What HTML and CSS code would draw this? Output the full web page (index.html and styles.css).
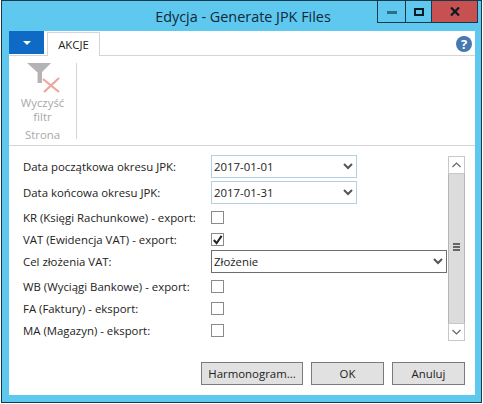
FILE: index.html
```html
<!DOCTYPE html>
<html lang="pl">

<head>
    <meta charset="UTF-8">
    <title>Edycja - Generate JPK Files</title>
    <link rel="stylesheet" href="styles.css">
</head>

<body>
    <div class="window">
        <div class="titlebar">
            <span class="title">Edycja - Generate JPK Files</span>
            <div class="window-controls">
                <div class="ctrl ctrl-min"><span class="min-glyph"></span></div>
                <div class="ctrl ctrl-max"><span class="max-glyph"></span></div>
                <div class="ctrl ctrl-close">
                    <svg width="10" height="9" viewBox="0 0 10 9"><path d="M1 0.5 L9 8.5 M9 0.5 L1 8.5" stroke="#0c1a26" stroke-width="2.2" fill="none"/></svg>
                </div>
            </div>
        </div>

        <div class="content">
            <div class="tabs">
                <div class="menu-button"><span class="menu-arrow"></span></div>
                <div class="tab">AKCJE</div>
                <div class="help">?</div>
            </div>

            <div class="ribbon">
                <div class="ribbon-group">
                    <svg class="filter-icon" width="34" height="30" viewBox="0 0 34 30">
                        <path d="M0 0 H24 L15 9 V20 L10 20 V9 Z" fill="#b4b4b6"/>
                        <path d="M10.5 9 V20" stroke="#dcdcdc" stroke-width="1"/>
                        <path d="M16 16 L32 29 M32 15 L17 29" stroke="#eda59c" stroke-width="2.2" fill="none"/>
                    </svg>
                    <div class="ribbon-label">Wyczyść<br>filtr</div>
                    <div class="group-name">Strona</div>
                </div>
            </div>

            <div class="form-area">
                <div class="form">
                    <div class="row row-field">
                        <label>Data początkowa okresu JPK:</label>
                        <div class="field date-field"><span>2017-01-01</span><svg class="chev" width="10" height="7" viewBox="0 0 10 7"><path d="M1 1 L5 5 L9 1" stroke="#555" stroke-width="2" fill="none"/></svg></div>
                    </div>
                    <div class="row row-field">
                        <label>Data końcowa okresu JPK:</label>
                        <div class="field date-field"><span>2017-01-31</span><svg class="chev" width="10" height="7" viewBox="0 0 10 7"><path d="M1 1 L5 5 L9 1" stroke="#555" stroke-width="2" fill="none"/></svg></div>
                    </div>
                    <div class="row">
                        <label>KR (Księgi Rachunkowe) - export:</label>
                        <div class="checkbox"></div>
                    </div>
                    <div class="row">
                        <label>VAT (Ewidencja VAT) - export:</label>
                        <div class="checkbox"><svg width="12" height="12" viewBox="0 0 12 12"><path d="M2 6 L5 9.5 L10.5 1.5" stroke="#222" stroke-width="2.2" fill="none"/></svg></div>
                    </div>
                    <div class="row row-field">
                        <label>Cel złożenia VAT:</label>
                        <div class="field select-field"><span>Złożenie</span><svg class="chev" width="10" height="7" viewBox="0 0 10 7"><path d="M1 1 L5 5 L9 1" stroke="#555" stroke-width="2" fill="none"/></svg></div>
                    </div>
                    <div class="row">
                        <label>WB (Wyciągi Bankowe) - export:</label>
                        <div class="checkbox"></div>
                    </div>
                    <div class="row">
                        <label>FA (Faktury) - eksport:</label>
                        <div class="checkbox"></div>
                    </div>
                    <div class="row">
                        <label>MA (Magazyn) - eksport:</label>
                        <div class="checkbox"></div>
                    </div>
                </div>

                <div class="scrollbar">
                    <div class="scroll-btn scroll-up"><svg width="9" height="6" viewBox="0 0 9 6"><path d="M0.5 5 L4.5 1 L8.5 5" stroke="#666" stroke-width="1.2" fill="none"/></svg></div>
                    <div class="scroll-track"><span class="grip"></span></div>
                    <div class="scroll-btn scroll-down"><svg width="9" height="6" viewBox="0 0 9 6"><path d="M0.5 1 L4.5 5 L8.5 1" stroke="#666" stroke-width="1.2" fill="none"/></svg></div>
                </div>
            </div>

            <div class="buttons">
                <button class="btn btn-wide">Harmonogram...</button>
                <button class="btn">OK</button>
                <button class="btn">Anuluj</button>
            </div>
        </div>
    </div>
</body>

</html>
```

FILE: styles.css
```css
html, body {
    margin: 0;
    padding: 0;
}

body {
    width: 483px;
    height: 404px;
    overflow: hidden;
    background-color: #fff;
    font-family: "Open Sans", "Noto Sans", sans-serif;
    font-size: 11.4px;
    color: #222;
}

.window {
    position: relative;
    box-sizing: border-box;
    width: 481px;
    height: 403px;
    margin-left: 1px;
    border: 1px solid #17384d;
    background-color: #5fc8ef;
    display: flex;
    flex-direction: column;
}

.titlebar {
    height: 30px;
    display: flex;
    justify-content: center;
    align-items: center;
}

.title {
    font-size: 14.4px;
    color: #10283a;
    margin-left: 3px;
}

.window-controls {
    position: absolute;
    top: 0;
    right: 3px;
    height: 21px;
    display: flex;
    border: 1px solid #17384d;
    border-top: none;
}

.ctrl {
    display: flex;
    align-items: center;
    justify-content: center;
    height: 21px;
    border-left: 1px solid #17384d;
}

.ctrl-min {
    width: 27px;
    border-left: none;
}

.ctrl-max {
    width: 25px;
}

.ctrl-close {
    width: 45px;
    background-color: #c75050;
}

.min-glyph {
    width: 10px;
    height: 3px;
    margin-top: 2px;
    background-color: #2f6d8c;
}

.max-glyph {
    box-sizing: border-box;
    width: 10px;
    height: 8px;
    border: 2px solid #0c1a26;
}

.content {
    flex: 1;
    margin: 0 6px 7px 7px;
    background-color: #fff;
    display: flex;
    flex-direction: column;
}

.tabs {
    height: 24px;
    display: flex;
    align-items: flex-end;
    border-bottom: 1px solid #d5d5d5;
    position: relative;
}

.menu-button {
    width: 35px;
    height: 23px;
    margin-bottom: 1px;
    background-color: #0e6ac4;
    display: flex;
    align-items: center;
    justify-content: center;
}

.menu-arrow {
    width: 0;
    height: 0;
    border-left: 4px solid transparent;
    border-right: 4px solid transparent;
    border-top: 4px solid #fff;
}

.tab {
    box-sizing: border-box;
    width: 53px;
    height: 24px;
    margin-left: 3px;
    margin-bottom: -1px;
    border: 1px solid #d5d5d5;
    border-bottom: none;
    background-color: #fff;
    text-align: center;
    line-height: 24px;
    color: #222;
}

.help {
    position: absolute;
    top: 5px;
    right: 3px;
    width: 16px;
    height: 16px;
    border-radius: 50%;
    background-color: #4878b0;
    color: #fff;
    font-weight: bold;
    font-size: 13px;
    line-height: 16px;
    text-align: center;
}

.ribbon {
    height: 90px;
    box-sizing: border-box;
    border-bottom: 1px solid #d5d5d5;
    padding-top: 7px;
}

.ribbon-group {
    box-sizing: border-box;
    width: 68px;
    height: 76px;
    border-right: 1px solid #d5d5d5;
    display: flex;
    flex-direction: column;
    align-items: center;
    color: #a8a8a8;
    line-height: 14px;
}

.filter-icon {
    flex-shrink: 0;
    margin-left: 2px;
}

.ribbon-label {
    text-align: center;
    margin-top: 3px;
}

.group-name {
    margin-top: 4px;
}

.form-area {
    display: flex;
    padding: 9px 10px 0 14px;
    height: 186px;
}

.form {
    flex: 1;
    display: flex;
    flex-direction: column;
}

.row {
    display: flex;
    align-items: center;
    height: 22px;
}

.row-field {
    height: 24px;
    margin-bottom: 2px;
}

label {
    width: 188px;
    flex-shrink: 0;
}

.field {
    box-sizing: border-box;
    height: 23px;
    display: flex;
    align-items: center;
    justify-content: space-between;
    padding: 0 3px 0 2px;
    background-color: #fff;
}

.date-field {
    width: 146px;
    border: 1px solid #b5cfe0;
}

.select-field {
    width: 236px;
    border: 1px solid #6d6d6d;
}

.checkbox {
    box-sizing: border-box;
    width: 13px;
    height: 13px;
    border: 1px solid #8a8a8a;
    display: flex;
}

.scrollbar {
    width: 17px;
    margin-top: 1px;
    display: flex;
    flex-direction: column;
}

.scroll-btn {
    box-sizing: border-box;
    height: 18px;
    border: 1px solid #c8c8c8;
    background-color: #fff;
    display: flex;
    align-items: center;
    justify-content: center;
}

.scroll-track {
    flex: 1;
    background-color: #dcdcdc;
    border-left: 1px solid #b5b5b5;
    border-right: 1px solid #b5b5b5;
    display: flex;
    align-items: center;
    justify-content: center;
}

.grip {
    width: 7px;
    height: 8px;
    margin-bottom: 3px;
    background: repeating-linear-gradient(#666 0 2px, transparent 2px 3px);
}

.buttons {
    display: flex;
    justify-content: flex-end;
    gap: 8px;
    padding: 21px 10px 0 0;
}

.btn {
    box-sizing: border-box;
    width: 73px;
    height: 23px;
    padding: 0;
    border: 1px solid #7a7a7a;
    background-color: #e1e1e1;
    font-family: "Open Sans", "Noto Sans", sans-serif;
    font-size: 11.4px;
    color: #222;
}

.btn-wide {
    width: 102px;
}
```
